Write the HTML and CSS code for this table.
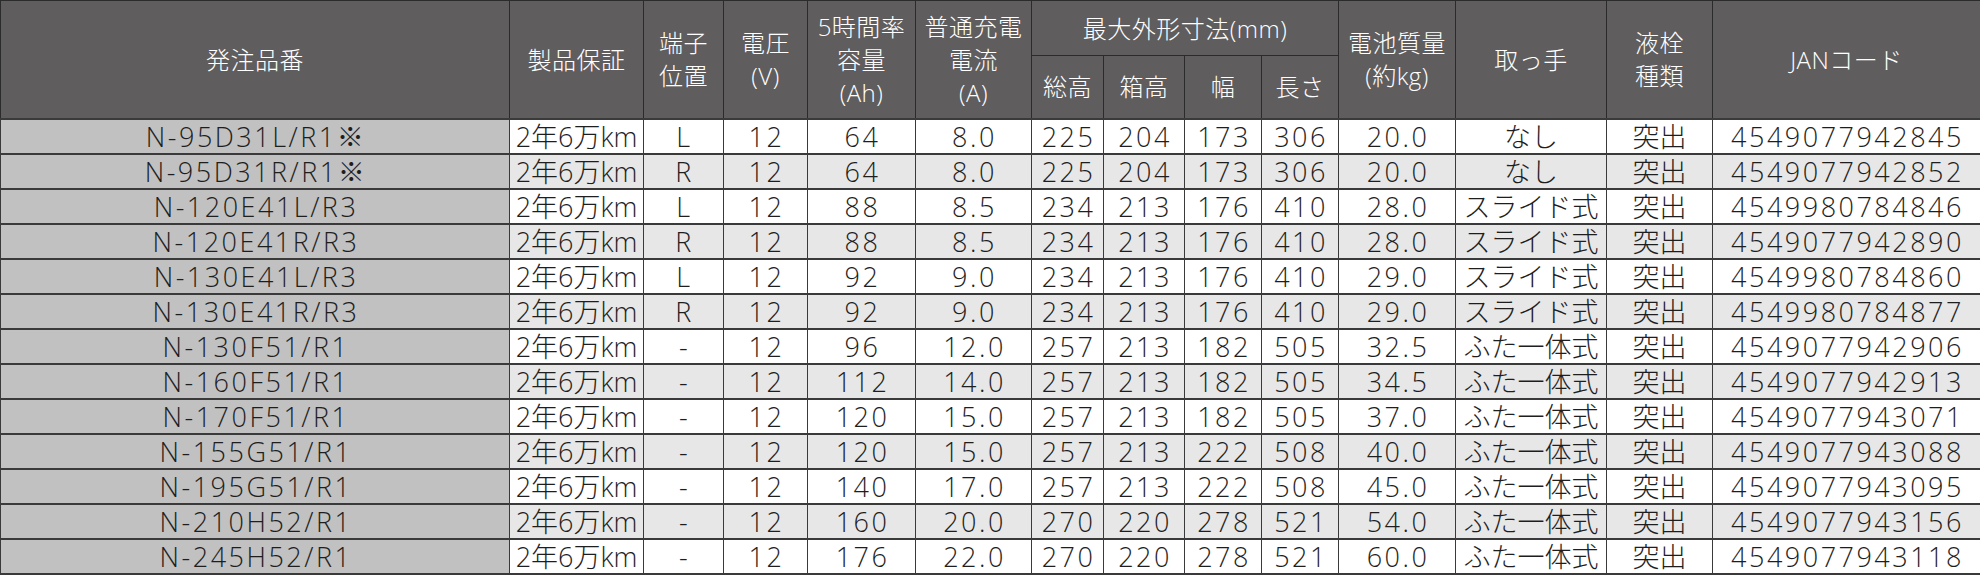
FILE: index.html
```html
<!DOCTYPE html>
<html lang="ja">
<head>
<meta charset="utf-8">
<title>バッテリー仕様表</title>
<link rel="stylesheet" href="styles.css">
</head>
<body>
<table class="spec">
  <colgroup>
    <col class="c-name"><col class="c-warranty"><col class="c-term"><col class="c-volt"><col class="c-cap"><col class="c-cur">
    <col class="c-h"><col class="c-bh"><col class="c-w"><col class="c-l"><col class="c-mass"><col class="c-handle"><col class="c-plug"><col class="c-jan">
  </colgroup>
  <thead>
    <tr class="h1">
      <th rowspan="2">発注品番</th>
      <th rowspan="2">製品保証</th>
      <th rowspan="2">端子<br>位置</th>
      <th rowspan="2">電圧<br>(V)</th>
      <th rowspan="2">5時間率<br>容量<br>(Ah)</th>
      <th rowspan="2">普通充電<br>電流<br>(A)</th>
      <th colspan="4" class="group">最大外形寸法(mm)</th>
      <th rowspan="2">電池質量<br>(約kg)</th>
      <th rowspan="2">取っ手</th>
      <th rowspan="2">液栓<br>種類</th>
      <th rowspan="2">JANコード</th>
    </tr>
    <tr class="h2">
      <th>総高</th><th>箱高</th><th>幅</th><th>長さ</th>
    </tr>
  </thead>
  <tbody>
    <tr><td class="name">N-95D31L/R1※</td><td class="jp">2年6万km</td><td>L</td><td>12</td><td>64</td><td>8.0</td><td>225</td><td>204</td><td>173</td><td>306</td><td>20.0</td><td class="jp">なし</td><td class="jp">突出</td><td>4549077942845</td></tr>
    <tr><td class="name">N-95D31R/R1※</td><td class="jp">2年6万km</td><td>R</td><td>12</td><td>64</td><td>8.0</td><td>225</td><td>204</td><td>173</td><td>306</td><td>20.0</td><td class="jp">なし</td><td class="jp">突出</td><td>4549077942852</td></tr>
    <tr><td class="name">N-120E41L/R3</td><td class="jp">2年6万km</td><td>L</td><td>12</td><td>88</td><td>8.5</td><td>234</td><td>213</td><td>176</td><td>410</td><td>28.0</td><td class="jp">スライド式</td><td class="jp">突出</td><td>4549980784846</td></tr>
    <tr><td class="name">N-120E41R/R3</td><td class="jp">2年6万km</td><td>R</td><td>12</td><td>88</td><td>8.5</td><td>234</td><td>213</td><td>176</td><td>410</td><td>28.0</td><td class="jp">スライド式</td><td class="jp">突出</td><td>4549077942890</td></tr>
    <tr><td class="name">N-130E41L/R3</td><td class="jp">2年6万km</td><td>L</td><td>12</td><td>92</td><td>9.0</td><td>234</td><td>213</td><td>176</td><td>410</td><td>29.0</td><td class="jp">スライド式</td><td class="jp">突出</td><td>4549980784860</td></tr>
    <tr><td class="name">N-130E41R/R3</td><td class="jp">2年6万km</td><td>R</td><td>12</td><td>92</td><td>9.0</td><td>234</td><td>213</td><td>176</td><td>410</td><td>29.0</td><td class="jp">スライド式</td><td class="jp">突出</td><td>4549980784877</td></tr>
    <tr><td class="name">N-130F51/R1</td><td class="jp">2年6万km</td><td>-</td><td>12</td><td>96</td><td>12.0</td><td>257</td><td>213</td><td>182</td><td>505</td><td>32.5</td><td class="jp">ふた一体式</td><td class="jp">突出</td><td>4549077942906</td></tr>
    <tr><td class="name">N-160F51/R1</td><td class="jp">2年6万km</td><td>-</td><td>12</td><td>112</td><td>14.0</td><td>257</td><td>213</td><td>182</td><td>505</td><td>34.5</td><td class="jp">ふた一体式</td><td class="jp">突出</td><td>4549077942913</td></tr>
    <tr><td class="name">N-170F51/R1</td><td class="jp">2年6万km</td><td>-</td><td>12</td><td>120</td><td>15.0</td><td>257</td><td>213</td><td>182</td><td>505</td><td>37.0</td><td class="jp">ふた一体式</td><td class="jp">突出</td><td>4549077943071</td></tr>
    <tr><td class="name">N-155G51/R1</td><td class="jp">2年6万km</td><td>-</td><td>12</td><td>120</td><td>15.0</td><td>257</td><td>213</td><td>222</td><td>508</td><td>40.0</td><td class="jp">ふた一体式</td><td class="jp">突出</td><td>4549077943088</td></tr>
    <tr><td class="name">N-195G51/R1</td><td class="jp">2年6万km</td><td>-</td><td>12</td><td>140</td><td>17.0</td><td>257</td><td>213</td><td>222</td><td>508</td><td>45.0</td><td class="jp">ふた一体式</td><td class="jp">突出</td><td>4549077943095</td></tr>
    <tr><td class="name">N-210H52/R1</td><td class="jp">2年6万km</td><td>-</td><td>12</td><td>160</td><td>20.0</td><td>270</td><td>220</td><td>278</td><td>521</td><td>54.0</td><td class="jp">ふた一体式</td><td class="jp">突出</td><td>4549077943156</td></tr>
    <tr><td class="name">N-245H52/R1</td><td class="jp">2年6万km</td><td>-</td><td>12</td><td>176</td><td>22.0</td><td>270</td><td>220</td><td>278</td><td>521</td><td>60.0</td><td class="jp">ふた一体式</td><td class="jp">突出</td><td>4549077943118</td></tr>
  </tbody>
</table>
</body>
</html>
```

FILE: styles.css
```css
html, body {
  margin: 0;
  padding: 0;
  background: #ffffff;
}

.spec {
  width: 1980px;
  border-collapse: collapse;
  table-layout: fixed;
  font-family: "Open Sans", "Noto Sans CJK JP", sans-serif;
  font-weight: 300;
  color: #1e1e1e;
}

.c-name { width: 509px; }
.c-warranty { width: 134px; }
.c-term { width: 80px; }
.c-volt { width: 84px; }
.c-cap { width: 108px; }
.c-cur { width: 116px; }
.c-h { width: 72px; }
.c-bh { width: 81px; }
.c-w { width: 77px; }
.c-l { width: 77px; }
.c-mass { width: 117px; }
.c-handle { width: 151px; }
.c-plug { width: 106px; }
.c-jan { width: 268px; }

.spec th,
.spec td {
  padding: 0;
  text-align: center;
  vertical-align: middle;
  white-space: nowrap;
  overflow: hidden;
}

.spec th {
  background: #5f5d5e;
  color: #ffffff;
  font-weight: 300;
  font-size: 24px;
  line-height: 33px;
  letter-spacing: 0.5px;
  border: 1px solid #2b2b2b;
}

.h1 { height: 55px; }
.h2 { height: 63px; }

.spec td {
  height: 33px;
  font-size: 27px;
  line-height: 33px;
  letter-spacing: 2.5px;
  padding-left: 2px;
  border: 1px solid #3a3a3a;
  border-top-width: 2px;
  background: #ffffff;
}

.spec td.jp {
  letter-spacing: 0;
  padding-left: 0;
}

.spec tbody tr:nth-child(even) td {
  background: #e7e7e7;
}

.spec tbody td.name,
.spec tbody tr:nth-child(even) td.name {
  background: #c1c1c1;
}

.spec tbody tr:last-child td {
  border-bottom-width: 2px;
}
```
